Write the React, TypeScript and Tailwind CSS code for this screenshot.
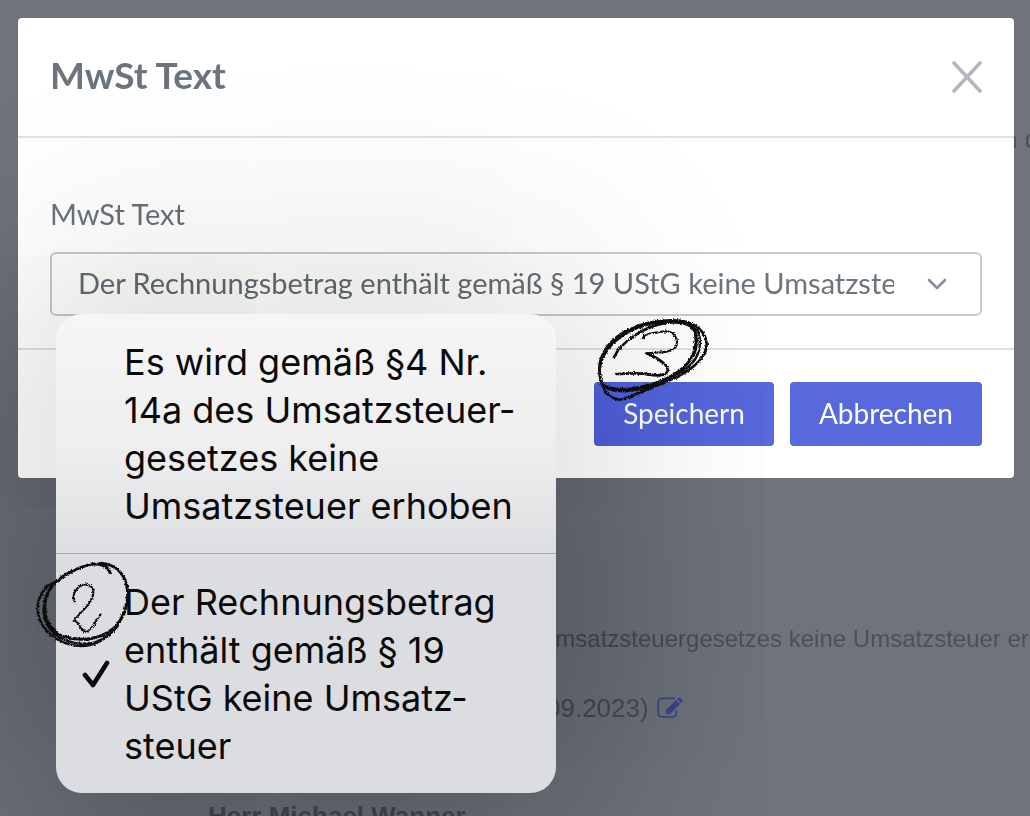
import { useState } from 'react'

const options = [
    {
        id: 'p4',
        label: 'Es wird gemäß §4 Nr. 14a des Umsatzsteuergesetzes keine Umsatzsteuer erhoben',
        menuLabel: 'Es wird gemäß §4 Nr. 14a des Umsatzsteuer\u00ADgesetzes keine Umsatzsteuer erhoben',
    },
    {
        id: 'p19',
        label: 'Der Rechnungsbetrag enthält gemäß § 19 UStG keine Umsatzsteuer',
        menuLabel: 'Der Rechnungsbetrag enthält gemäß § 19 UStG keine Umsatz\u00ADsteuer',
    },
]

function EditIcon() {
    return (
        <svg width="26" height="22" viewBox="0 0 78 66" fill="none">
            <path
                d="M52 4H16Q4 4 4 16V48Q4 60 16 60H46Q58 60 58 48V42"
                stroke="#3f4987"
                strokeWidth="5"
                strokeLinecap="round"
            />
            <path d="M27 51V38L57 9L69 21L39 51ZM60 6L64 2Q67 0 70 3L76 9Q78 12 76 15L72 18Z" fill="#3f4987" />
            <path d="M32 41L36 46" stroke="#6b6f79" strokeWidth="3" />
        </svg>
    )
}

// Charcoal look for the hand-drawn step markers
function RoughFilter({ id }: { id: string }) {
    return (
        <filter id={id} x="-10%" y="-10%" width="120%" height="120%">
            <feTurbulence type="fractalNoise" baseFrequency="0.6" numOctaves="2" seed="4" result="noise" />
            <feDisplacementMap in="SourceGraphic" in2="noise" scale="10" xChannelSelector="R" yChannelSelector="G" />
        </filter>
    )
}

function StepThree() {
    return (
        <svg
            className="absolute -left-3.5 -top-[82px] z-20 pointer-events-none"
            width="220"
            height="160"
            viewBox="0 0 660 480"
            fill="none"
            stroke="#0a0a0a"
            strokeLinecap="round"
        >
            <RoughFilter id="rough3" />
            <g filter="url(#rough3)">
                <path
                    strokeWidth="8"
                    d="M102 172C120 130 190 78 262 68C330 62 352 84 350 130C346 190 290 228 210 256C150 278 86 282 66 248C44 190 70 140 120 104C170 72 240 56 296 62C350 68 380 98 380 136C378 180 322 218 270 240C226 258 180 276 146 292C110 308 78 290 70 258"
                />
                <path
                    strokeWidth="7"
                    d="M66 256C42 190 80 132 150 94C210 62 290 56 336 78C372 100 364 158 336 190C300 230 210 258 150 266C110 270 82 266 66 250C54 214 58 180 74 156C110 104 180 72 250 66"
                />
                <path strokeWidth="6" d="M60 200C70 140 120 96 200 74M76 262C130 286 200 270 262 236C320 206 356 160 344 94" />
                <path strokeWidth="6" d="M188 116C192 98 230 98 256 94C286 94 296 122 288 140C272 162 230 156 200 160" />
                <path strokeWidth="8" d="M200 160C228 172 258 188 264 210C260 228 234 228 208 224C176 216 142 222 110 222" />
            </g>
        </svg>
    )
}

function StepTwo() {
    return (
        <svg
            className="absolute -left-9 top-[226px] pointer-events-none"
            width="220"
            height="160"
            viewBox="0 0 660 480"
            fill="none"
            stroke="#0a0a0a"
            strokeLinecap="round"
        >
            <RoughFilter id="rough2" />
            <g filter="url(#rough2)">
                <path
                    strokeWidth="9"
                    d="M270 98C262 72 230 68 200 76C150 92 92 124 78 172C66 220 82 270 130 290C180 304 240 300 280 266C318 230 326 180 322 148C316 104 290 74 244 70"
                />
                <path strokeWidth="7" d="M112 126C70 132 48 180 54 220C62 268 110 312 176 318C226 320 268 290 296 254" />
                <path strokeWidth="7" d="M120 118C78 148 64 196 74 236C88 282 130 308 190 312C230 310 260 296 276 272" />
                <path strokeWidth="6" d="M164 184C152 158 178 132 200 134C228 140 224 166 206 192C190 214 170 228 162 242C178 242 176 270 198 276C218 270 222 246 242 224" />
            </g>
        </svg>
    )
}

export default function App() {
    const [selected, setSelected] = useState('p19')

    return (
        <div className="grid h-screen overflow-hidden bg-[#6f737c] font-['Lato',sans-serif]">
            {/* Dimmed invoice page */}
            <div className="relative col-start-1 row-start-1 h-screen overflow-hidden whitespace-nowrap text-[26px] leading-8 text-[#4c505a] font-['Liberation_Sans',sans-serif]">
                <p className="pt-[123px] pl-[1003px]">n d</p>
                <p className="mt-[468px] pl-[538px] text-2xl leading-8">Umsatzsteuergesetzes keine Umsatzsteuer erhoben</p>
                <p className="mt-[37px] flex items-center gap-2 pl-[546px]">
                    09.2023)
                    <a href="#edit" aria-label="Bearbeiten">
                        <EditIcon />
                    </a>
                </p>
                <p className="mt-[76px] pl-52 font-bold">Herr Michael Wanner</p>
            </div>

            {/* Dialog */}
            <div
                role="dialog"
                aria-labelledby="dialog-title"
                className="relative col-start-1 row-start-1 mt-[18px] mr-4 ml-[18px] self-start rounded bg-white text-[#6c757d]"
            >
                <div className="flex h-30 items-center justify-between border-b-2 border-[#dee2e6] px-8">
                    <h1 id="dialog-title" className="pb-1 text-[37px] leading-11 font-bold">MwSt Text</h1>
                    <button aria-label="Schließen">
                        <svg width="30" height="32" viewBox="0 0 30 32" stroke="#b1b7bd" strokeWidth="3.6" strokeLinecap="round">
                            <path d="M2 2L28 30M28 2L2 30" />
                        </svg>
                    </button>
                </div>

                <div className="px-8 pt-14 pb-8">
                    <label htmlFor="mwst" className="mb-[18px] block text-[29px] leading-10">MwSt Text</label>
                    <div className="relative">
                        <select
                            id="mwst"
                            value={selected}
                            onChange={(e) => setSelected(e.target.value)}
                            className="block h-16 w-full appearance-none rounded-md border-2 border-[#c8cad0] bg-transparent pr-[86px] pb-0.5 pl-[26px] text-[29px]"
                        >
                            {options.map((o) => (
                                <option key={o.id} value={o.id}>{o.label}</option>
                            ))}
                        </select>
                        <svg
                            className="absolute top-[26px] right-[35px] pointer-events-none"
                            width="20"
                            height="13"
                            viewBox="0 0 20 13"
                            fill="none"
                            stroke="#87909b"
                            strokeWidth="2.6"
                            strokeLinecap="round"
                            strokeLinejoin="round"
                        >
                            <path d="M2 2L10 10L18 2" />
                        </svg>

                        {/* Open option list */}
                        <div className="absolute top-[62px] left-1.5 w-[500px]">
                            <div className="absolute inset-0 z-10 rounded-[26px] mix-blend-difference shadow-[0_0_220px_40px_#2a2a2c] pointer-events-none" />
                            <div
                                role="listbox"
                                aria-label="MwSt Text"
                                className="relative z-20 rounded-[26px] bg-linear-to-b from-[#f6f6f6] from-0% via-[#eeeeef] via-28% to-[#dcdde0] to-52% text-4xl leading-12 text-[#0a0a0a] font-['Inter',sans-serif]"
                            >
                                {options.map((o, i) => (
                                    <button
                                        key={o.id}
                                        role="option"
                                        aria-selected={o.id === selected}
                                        onClick={() => setSelected(o.id)}
                                        className={`flex w-full items-center pt-6 pr-5 pb-[23px] text-left leading-12 ${i > 0 ? 'border-t border-[#a5a7aa]' : ''}`}
                                    >
                                        <span className="flex w-17 shrink-0 justify-center pl-3">
                                            {o.id === selected && (
                                                <svg width="28" height="28" viewBox="0 0 28 28" fill="none" stroke="#0a0a0a" strokeWidth="4.6" strokeLinecap="round" strokeLinejoin="round">
                                                    <path d="M3 15L11 25L25 3" />
                                                </svg>
                                            )}
                                        </span>
                                        <span>{o.menuLabel}</span>
                                    </button>
                                ))}
                                <StepTwo />
                            </div>
                        </div>
                    </div>
                </div>

                <div className="flex justify-end gap-4 border-t-2 border-[#dee2e6] p-8 text-[28px] text-white">
                    <div className="relative">
                        <button className="h-16 rounded bg-[#5869de] px-[29px] pb-0.5">Speichern</button>
                        <StepThree />
                    </div>
                    <button className="h-16 rounded bg-[#5869de] px-[29px] pb-0.5">Abbrechen</button>
                </div>
            </div>
        </div>
    )
}
